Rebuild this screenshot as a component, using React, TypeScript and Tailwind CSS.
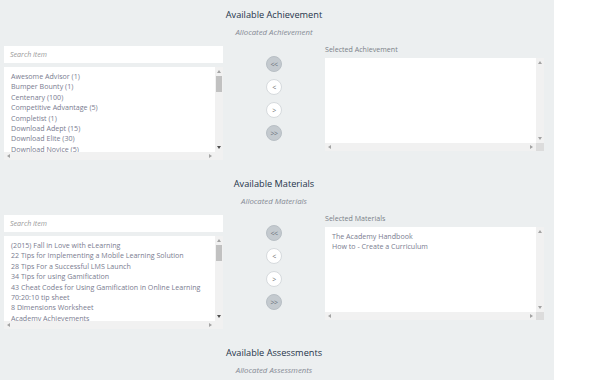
import React from "react";

const Tri = ({ dir, dark }: { dir: "up" | "down" | "left" | "right"; dark?: boolean }) => {
  const pts =
    dir === "up" ? "0,3 2,0 4,3" : dir === "down" ? "0,0 4,0 2,3" : dir === "left" ? "3,0 3,4 0,2" : "0,0 0,4 3,2";
  const w = dir === "up" || dir === "down" ? 4 : 3;
  const h = dir === "up" || dir === "down" ? 3 : 4;
  return (
    <svg width={w} height={h} viewBox={`0 0 ${w} ${h}`} className="block">
      <polygon points={pts} fill={dark ? "#505050" : "#a3a3a3"} />
    </svg>
  );
};

const ListBox = ({ items, thumb, corner }: { items: string[]; thumb?: boolean; corner?: boolean }) => (
  <div className="flex flex-col">
    <div className="flex h-[85px]">
      <div className="flex-1 bg-white overflow-hidden pt-[4px] pl-[7px] text-[7.1px] leading-[10.4px] text-[#7a7c90] whitespace-nowrap">
        {items.map((t) => (
          <div key={t}>{t}</div>
        ))}
      </div>
      <div className="w-[8px] bg-[#f1f1f1] flex flex-col items-center justify-between py-[3px]">
        <div className="flex flex-col items-center w-full">
          <Tri dir="up" />
          {thumb && <div className="mt-[3px] w-[6px] h-[16px] bg-[#c1c1c1]" />}
        </div>
        <Tri dir="down" dark={thumb} />
      </div>
    </div>
    <div className="flex h-[8px]">
      <div className="flex-1 bg-[#f1f1f1] flex items-center justify-between px-[3px]">
        <Tri dir="left" />
        <Tri dir="right" />
      </div>
      {corner ? <div className="w-[8px] bg-[#dcdcdc]" /> : <div className="w-[8px] bg-[#f1f1f1]" />}
    </div>
  </div>
);

const CircleBtn = ({ label, gray }: { label: string; gray?: boolean }) => (
  <div
    className={`w-[16px] h-[16px] rounded-full flex items-center justify-center text-[7px] leading-none tracking-[-0.6px] ${
      gray ? "bg-[#c4cacf] border border-[#b8bfc5] text-[#69717a]" : "bg-white border border-[#d6dadd] text-[#6f6f6f]"
    }`}
  >
    {label}
  </div>
);

const Section = ({
  title,
  sub,
  selLabel,
  items,
  selected,
}: {
  title: string;
  sub: string;
  selLabel: string;
  items: string[];
  selected: string[];
}) => (
  <div className="pt-[8px] pb-[9px] flex flex-col">
    <div className="h-[14px] leading-[14px] text-[9.2px] font-medium text-[#25344a] text-center pl-[4px] pr-[10px]">
      {title}
    </div>
    <div className="mt-[4px] h-[12px] leading-[12px] text-[7.8px] italic text-[#858a94] text-center pl-[4px] pr-[10px]">
      {sub}
    </div>
    <div className="mt-[8px] flex pl-[4px]">
      <div className="w-[219px] flex flex-col gap-[4px]">
        <div className="h-[17px] bg-white flex items-center pl-[6px] text-[7.1px] italic text-[#9a9a9a]">
          Search item
        </div>
        <ListBox items={items} thumb />
      </div>
      <div className="w-[102px] flex flex-col items-center pt-[10px] gap-[7px]">
        <CircleBtn label="<<" gray />
        <CircleBtn label="<" />
        <CircleBtn label=">" />
        <CircleBtn label=">>" gray />
      </div>
      <div className="w-[219px] flex flex-col">
        <div className="h-[12px] leading-[6px] text-[7.1px] text-[#7b7f88]">{selLabel}</div>
        <ListBox items={selected} corner />
      </div>
    </div>
  </div>
);

export default function App() {
  return (
    <div
      className="w-[602px] h-[380px] overflow-hidden bg-white flex"
      style={{ fontFamily: '"Open Sans", "Noto Sans", sans-serif' }}
    >
      <div className="w-[554px] bg-[#eceff0] flex flex-col">
        <Section
          title="Available Achievement"
          sub="Allocated Achievement"
          selLabel="Selected Achievement"
          items={[
            "Awesome Advisor (1)",
            "Bumper Bounty (1)",
            "Centenary (100)",
            "Competitive Advantage (5)",
            "Completist (1)",
            "Download Adept (15)",
            "Download Elite (30)",
            "Download Novice (5)",
            "Early Bird (1)",
          ]}
          selected={[]}
        />
        <Section
          title="Available Materials"
          sub="Allocated Materials"
          selLabel="Selected Materials"
          items={[
            "(2015) Fall in Love with eLearning",
            "22 Tips for Implementing a Mobile Learning Solution",
            "28 Tips For a Successful LMS Launch",
            "34 Tips for using Gamification",
            "43 Cheat Codes for Using Gamification in Online Learning",
            "70:20:10 tip sheet",
            "8 Dimensions Worksheet",
            "Academy Achievements",
            "Academy Handbook",
          ]}
          selected={["The Academy Handbook", "How to - Create a Curriculum"]}
        />
        <Section
          title="Available Assessments"
          sub="Allocated Assessments"
          selLabel="Selected Assessments"
          items={[]}
          selected={[]}
        />
      </div>
    </div>
  );
}
